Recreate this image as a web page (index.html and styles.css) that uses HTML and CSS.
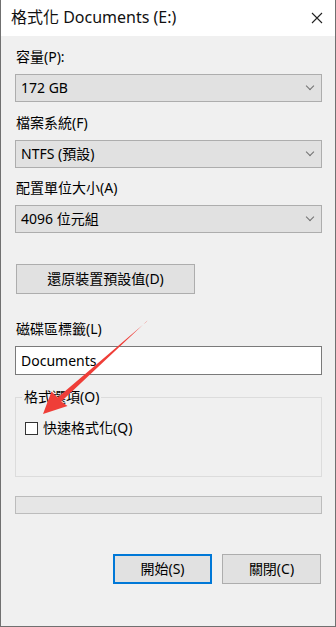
FILE: index.html
```html
<!DOCTYPE html>
<html lang="zh-Hant">
<head>
  <meta charset="UTF-8">
  <meta name="viewport" content="width=device-width, initial-scale=1.0">
  <title>格式化 Documents (E:)</title>
  <link rel="stylesheet" href="styles.css">
</head>
<body>
  <div class="win">
    <!-- 타이틀바 -->
    <div class="titlebar">
      <span class="title">格式化 Documents (E:)</span>
      <svg class="close" width="12" height="12" viewBox="0 0 12 12">
        <path d="M1 1 L11 11 M11 1 L1 11" stroke="#222" stroke-width="1.1" fill="none"/>
      </svg>
    </div>

    <div class="client">
      <div class="lbl l1">容量(P):</div>
      <div class="combo"><span>172 GB</span><i class="chev"></i></div>

      <div class="lbl l2">檔案系統(F)</div>
      <div class="combo"><span>NTFS (預設)</span><i class="chev"></i></div>

      <div class="lbl l3">配置單位大小(A)</div>
      <div class="combo"><span>4096 位元組</span><i class="chev"></i></div>

      <div class="btn reset">還原裝置預設值(D)</div>

      <div class="lbl l4">磁碟區標籤(L)</div>
      <div class="input">Documents</div>

      <fieldset class="group">
        <legend>格式選項(O)</legend>
        <div class="check"><i class="box"></i><span>快速格式化(Q)</span></div>
      </fieldset>

      <div class="progress"></div>

      <div class="actions">
        <div class="btn primary">開始(S)</div>
        <div class="btn">關閉(C)</div>
      </div>
    </div>

    <!-- 빨간 화살표 -->
    <svg class="arrow" width="336" height="627" viewBox="0 0 336 627">
      <polygon points="147.5,320.5 146.5,321.8 57.6,397.6 51.5,391.5 43,414 67.5,406 61.3,401.4" fill="#ef3e38"/>
    </svg>
  </div>
</body>
</html>
```

FILE: styles.css
```css
html, body{
  margin: 0;
  padding: 0;
}
*{
  box-sizing: border-box;
}

/* 창 전체 */
.win{
  position: relative;
  width: 336px;
  height: 627px;
  border: 1px solid #707070;
  border-top: none;
  background-color: #f0f0f0;
  font: 14px/16px "Noto Sans", "Noto Sans CJK TC", sans-serif;
  color: #000;
  overflow: hidden;
}

.titlebar{
  display: flex;
  align-items: center;
  justify-content: space-between;
  height: 36px;
  padding: 0 12px 2px 10px;
  background-color: #fff;
}
.title{
  font-size: 16px;
  line-height: 20px;
  color: #111;
}
.close{
  display: block;
  margin-top: 1px;
}

.client{
  display: flex;
  flex-direction: column;
  padding: 13px 13px 0 14px;
}

.lbl{
  height: 16px;
  margin-bottom: 9px;
  padding-left: 1px;
}
.l2{ margin-top: 13px; }
.l3{ margin-top: 12px; }
.l4{ margin-top: 27px; }

/* 콤보박스 */
.combo{
  display: flex;
  align-items: center;
  justify-content: space-between;
  height: 28px;
  padding: 0 8px 0 5px;
  border: 1px solid #adadad;
  background-color: #e1e1e1;
}
.chev{
  width: 6px;
  height: 6px;
  margin-top: -4px;
  border-right: 1px solid #707070;
  border-bottom: 1px solid #707070;
  transform: rotate(45deg);
}

/* 버튼 */
.btn{
  display: flex;
  align-items: center;
  justify-content: center;
  height: 30px;
  border: 1px solid #adadad;
  background-color: #e1e1e1;
}
.reset{
  width: 179px;
  margin: 31px 0 0 1px;
}
.primary{
  border: 2px solid #0078d7;
}

.input{
  height: 29px;
  padding: 0 5px;
  border: 1px solid #7a7a7a;
  background-color: #fff;
  line-height: 27px;
}

/* 그룹박스 */
.group{
  height: 87px;
  margin: 15px 0 0;
  padding: 10px 9px 0;
  border: 1px solid #dcdcdc;
}
.group legend{
  margin-left: -3px;
  padding: 0 2px;
  line-height: 14px;
}
.check{
  display: flex;
  align-items: center;
  gap: 5px;
  margin-top: 6px;
}
.box{
  width: 13px;
  height: 13px;
  border: 1px solid #333;
  background-color: #fff;
}

.progress{
  height: 18px;
  margin-top: 19px;
  border: 1px solid #bcbcbc;
  background-color: #e6e6e6;
}

.actions{
  display: flex;
  justify-content: flex-end;
  gap: 10px;
  margin: 40px 1px 0 0;
}
.actions .btn{
  width: 99px;
}

.arrow{
  position: absolute;
  left: -1px;
  top: 0;
  pointer-events: none;
}
```
